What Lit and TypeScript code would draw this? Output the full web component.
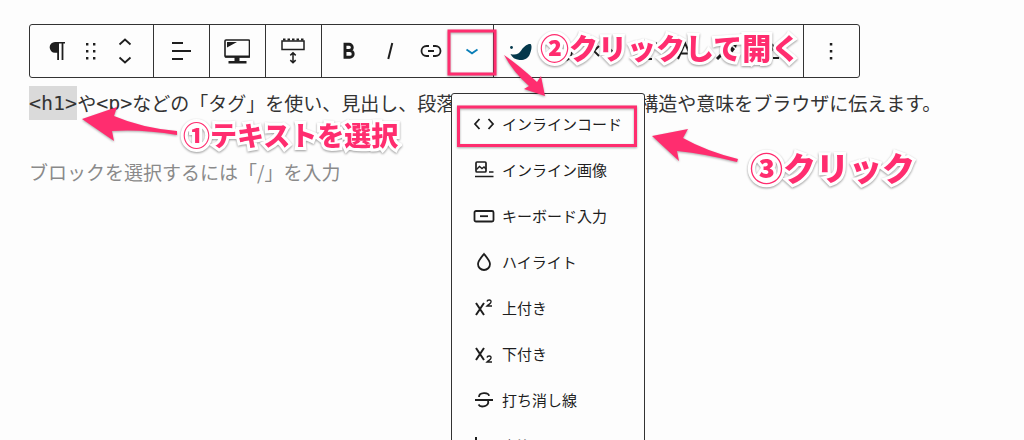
import { LitElement, html, css, svg } from 'lit';
import { customElement, state } from 'lit/decorators.js';

const line = (d: string, w = 1.6) =>
  svg`<path d=${d} fill="none" stroke="currentColor" stroke-width=${w} />`;
const solid = (d: string) => svg`<path d=${d} fill="currentColor" />`;

// Every glyph is drawn on a 26 x 26 grid.
const icons: Record<string, unknown> = {
  paragraph: svg`${solid('M11 4h10v1.600h-1.600V22h-1.800V5.600h-2.600V22h-1.800v-7.300H11a5.300 5.300 0 0 1 0-10.700z')}`,
  drag: svg`${solid('M8 5h2.4v2.4H8zM15 5h2.4v2.4H15zM8 12h2.4v2.4H8zM15 12h2.4v2.4H15zM8 19h2.4v2.4H8zM15 19h2.4v2.4H15z')}`,
  align: svg`${line('M4 5h11M4 13h19M4 21h11', 1.9)}`,
  monitor: svg`<rect x="1" y="2" width="24.5" height="17" rx="1" fill="none" stroke="currentColor" stroke-width="1.6"/>${solid('M3 4h10L3 9.500zM1 17.5h25v2H1zM10.5 19h5v4.5h-5zM4.500 23h18v2.600h-18z')}`,
  spacer: svg`<rect x="2" y="3" width="22" height="8.500" fill="none" stroke="currentColor" stroke-width="1.500"/>${line('M3 1.500h2.500M7.500 1.500h2.500M12 1.500h2.500M16.500 1.500h2.500M21 1.500h2.500', 2)}${line('M13 15v9.500M10.300 17.400l2.700-2.700 2.700 2.700M10.300 22.100l2.700 2.700 2.700-2.700', 1.5)}`,
  bold: svg`${line('M9 6.300h4.200a3.100 3.100 0 0 1 0 6.200H9zM9 12.500h4.800a3.400 3.400 0 0 1 0 6.800H9z', 2.9)}`,
  italic: svg`${line('M15.300 5l-4 16', 2)}`,
  link: svg`${line('M11 8H8.500a5 5 0 0 0 0 10H11M15 8h2.500a5 5 0 0 1 0 10H15M10 13h6', 1.8)}`,
  down: svg`${line('M7.500 11.500l5.500 3.800 5.500-3.800', 1.8)}`,
  leaf: svg`<path d="M2.500 16c5 1.500 8.500 0 11-4 2.200-3.700 6.500-6.500 9-6 1.600 1 1.300 6-.8 10.500-2 4.500-6 5.900-10.200 5.500C7 21.500 4 19.500 2.500 16z" fill="#04384c"/><circle cx="3.500" cy="9.500" r="1.400" fill="#04384c"/>`,
  palette: svg`${line('M5 9h4M20 8a8.500 8.500 0 1 1-14 8M10 12l3 1', 1.7)}`,
  code: svg`${line('M9 8l-5 5 5 5M17 8l5 5-5 5', 1.9)}`,
  type: svg`${line('M9 5h17M17.500 5v16M14 21h7', 2)}`,
  letter: svg`${line('M6 21l7-16 7 16M8 15.500h10', 2)}`,
  marker: svg`${line('M4 21l5-5', 3)}${solid('M9 14l8-7 5 4-6 8zM20 7l4-1-1 4z')}`,
  note: svg`${line('M15 7c4-2 6 2 3 5l-3 4M19 20h6', 2)}`,
  more: svg`${solid('M11.800 5h2.500v2.500h-2.500zM11.800 12h2.500v2.500h-2.500zM11.800 19h2.500v2.500h-2.500z')}`,
  angle: svg`${line('M8.500 8L4 13l4.500 5M17.500 8l4.500 5-4.500 5', 1.8)}`,
  image: svg`<rect x="5" y="5" width="10" height="10" rx="1" fill="none" stroke="currentColor" stroke-width="1.700"/>${line('M5.500 12.500l3-3 2.500 2 2-1.500 2 2', 1.4)}${line('M18 15h4.500M4 19.500h18.500', 1.7)}`,
  keyboard: svg`<rect x="3.500" y="8" width="19" height="10.500" rx="1.500" fill="none" stroke="currentColor" stroke-width="1.800"/>${line('M9 13.200h8', 1.8)}`,
  drop: svg`${line('M13 5c-3.300 4-6 7-6 10a6 6 0 0 0 12 0c0-3-2.700-6-6-10z', 1.8)}`,
  sup: svg`${line('M5 8l8 12M13 8L5 20', 2)}${line('M16 6.500c.5-2 4.500-2 4 .5 0 1.500-2.500 2.500-4 4h5', 1.4)}`,
  sub: svg`${line('M5 7l8 12M13 7L5 19', 2)}${line('M16 16.500c.5-2 4.500-2 4 .5 0 1.500-2.500 2.500-4 4h5', 1.4)}`,
  strike: svg`${line('M4 13h18M8 10c0-5 9.500-5 10-1.200M17 13.500c2 6-7.500 7.500-9.500 4', 1.8)}`,
  foot: svg`${line('M5 8v11h7M5 4v4', 2)}`,
};

const icon = (name: string) =>
  html`<svg class="icon" viewBox="0 0 26 26" aria-hidden="true">${icons[name]}</svg>`;

const groups = [
  [['align', '配置']],
  [['monitor', '表示デバイス']],
  [['spacer', '余白']],
];

const formats = [
  ['angle', 'インラインコード'],
  ['image', 'インライン画像'],
  ['keyboard', 'キーボード入力'],
  ['drop', 'ハイライト'],
  ['sup', '上付き'],
  ['sub', '下付き'],
  ['strike', '打ち消し線'],
  ['foot', '脚注'],
];

@customElement('app-root')
export class AppRoot extends LitElement {
  static styles = css`
    :host {
      display: block;
      font-family: 'Noto Sans CJK JP', sans-serif;
      color: #1e1e1e;
      background: #fdfdfd;
    }
    .page {
      position: relative;
      box-sizing: border-box;
      height: 100vh;
      overflow: hidden;
      padding: 24px 29px;
    }
    .toolbar {
      display: flex;
      width: fit-content;
      height: 52px;
      border: 1px solid #333;
      border-radius: 3px;
    }
    .group {
      display: flex;
      align-items: center;
      padding: 0 8px 0 6px;
    }
    .group + .group {
      border-left: 1px solid #333;
    }
    .group.wide {
      padding-right: 1px;
    }
    .group.swell {
      padding-right: 16px;
    }
    button {
      display: flex;
      align-items: center;
      justify-content: center;
      margin: 0;
      padding: 0;
      border: 0;
      background: none;
      color: inherit;
      font: inherit;
    }
    .tool {
      width: 41px;
      height: 52px;
    }
    .handle {
      width: 28px;
      height: 52px;
    }
    .movers {
      display: flex;
      flex-direction: column;
      width: 40px;
    }
    .mover {
      height: 18px;
    }
    .mover svg {
      width: 14px;
      height: 8px;
    }
    .icon {
      width: 26px;
      height: 26px;
      flex: none;
    }
    .open {
      color: #0b7fb8;
    }
    .text {
      margin: 8px 0 0;
      font-size: 19px;
      line-height: 33px;
      white-space: nowrap;
      color: #333;
    }
    code {
      display: inline-block;
      font-family: 'DejaVu Sans Mono', monospace;
      font-size: 20px;
      line-height: 34px;
      vertical-align: top;
    }
    .selected {
      background: #dadada;
    }
    .prompt {
      display: block;
      width: 100%;
      box-sizing: border-box;
      margin: 35px 0 0;
      padding: 0;
      border: 0;
      background: none;
      font: inherit;
      font-size: 19px;
      line-height: 33px;
      height: 33px;
    }
    .prompt::placeholder {
      color: #8a8a8a;
      opacity: 1;
    }
    .menu {
      position: absolute;
      left: 451px;
      top: 93px;
      width: 192px;
      margin: 0;
      padding: 7px 0;
      list-style: none;
      border: 1px solid #333;
      border-radius: 3px;
      background: #fdfdfd;
    }
    .item {
      justify-content: flex-start;
      gap: 5px;
      width: 100%;
      height: 46px;
      padding-left: 19px;
      font-size: 15px;
      line-height: 22px;
      text-align: left;
    }
    .marks {
      position: absolute;
      left: 0;
      top: 0;
      width: 1024px;
      height: 440px;
      pointer-events: none;
      filter: drop-shadow(0 1px 1px #0005);
    }
    .callout {
      position: absolute;
      font-weight: 900;
      white-space: nowrap;
      color: #ff2d6f;
      -webkit-text-stroke: 6px #fff;
      paint-order: stroke fill;
      filter: drop-shadow(0 1px 1px #0006);
      pointer-events: none;
    }
    .first {
      left: 183px;
      top: 115px;
      font-size: 27px;
      line-height: 40px;
    }
    .second {
      left: 540px;
      top: 27px;
      font-size: 29px;
      line-height: 40px;
    }
    .third {
      left: 750px;
      top: 147px;
      font-size: 33px;
      line-height: 40px;
    }
  `;

  @state() private menuOpen = true;

  private toggle() {
    this.menuOpen = !this.menuOpen;
  }

  private tool(name: string, label: string) {
    return html`<button class="tool" type="button" aria-label=${label}>${icon(name)}</button>`;
  }

  private mover(label: string, d: string) {
    return html`<button class="mover" type="button" aria-label=${label}>
      <svg viewBox="0 0 14 8" aria-hidden="true">${line(d, 1.8)}</svg>
    </button>`;
  }

  render() {
    return html`
      <main class="page">
        <div class="toolbar" role="toolbar" aria-label="ブロックツール">
          <div class="group">
            ${this.tool('paragraph', '段落')}
            <button class="handle" type="button" aria-label="ドラッグ">${icon('drag')}</button>
            <div class="movers">
              ${this.mover('上に移動', 'M1.500 6.500L7 1.500l5.500 5')}
              ${this.mover('下に移動', 'M1.500 1.500L7 6.500l5.500-5')}
            </div>
          </div>
          ${groups.map(
            (g) => html`<div class="group">${g.map(([n, l]) => this.tool(n, l))}</div>`
          )}
          <div class="group wide">
            ${this.tool('bold', '太字')} ${this.tool('italic', 'イタリック')}
            ${this.tool('link', 'リンク')}
            <button
              class="tool open"
              type="button"
              aria-label="さらに表示"
              aria-expanded=${this.menuOpen}
              @click=${this.toggle}
            >
              ${icon('down')}
            </button>
          </div>
          <div class="group swell">
            ${this.tool('leaf', 'SWELL装飾')} ${this.tool('palette', '書式')}
            ${this.tool('code', 'コード')} ${this.tool('type', '文字サイズ')}
            ${this.tool('letter', '文字色')} ${this.tool('marker', 'マーカー')}
            ${this.tool('note', '注釈')}
          </div>
          <div class="group">${this.tool('more', 'オプション')}</div>
        </div>

        <p class="text"><code class="selected">&lt;h1&gt;</code>や<code>&lt;p&gt;</code>などの「タグ」を使い、見出し、段落などの、HTML文書の構造や意味をブラウザに伝えます。</p>
        <input
          class="prompt"
          type="text"
          aria-label="ブロックを追加"
          placeholder="ブロックを選択するには「/」を入力"
        />

        ${this.menuOpen
          ? html`<ul class="menu">
              ${formats.map(
                ([n, l]) => html`<li>
                  <button class="item" type="button">${icon(n)}<span>${l}</span></button>
                </li>`
              )}
            </ul>`
          : ''}

        <svg class="marks" viewBox="0 0 1024 440" aria-hidden="true">
          <g fill="none" stroke="#ff2d6f" stroke-width="3">
            <rect x="449" y="31" width="46" height="43" />
            <rect x="458.500" y="107" width="177" height="38.500" />
          </g>
          <g fill="#ff2d6f">
            <path d="M82 119L117 107L114 116Q142 128 177 131V135Q142 129 112 131L114 141Z" />
            <path d="M504 55Q520 66 537 82L541 76L545 96L524 89L529 86Q514 73 504 55Z" />
            <path d="M652 136L688 129L683 138Q706 151 738 159L737 162Q706 154 677 151L679 161Z" />
          </g>
        </svg>
        <span class="callout first">①テキストを選択</span>
        <span class="callout second">②クリックして開く</span>
        <span class="callout third">③クリック</span>
      </main>
    `;
  }
}
